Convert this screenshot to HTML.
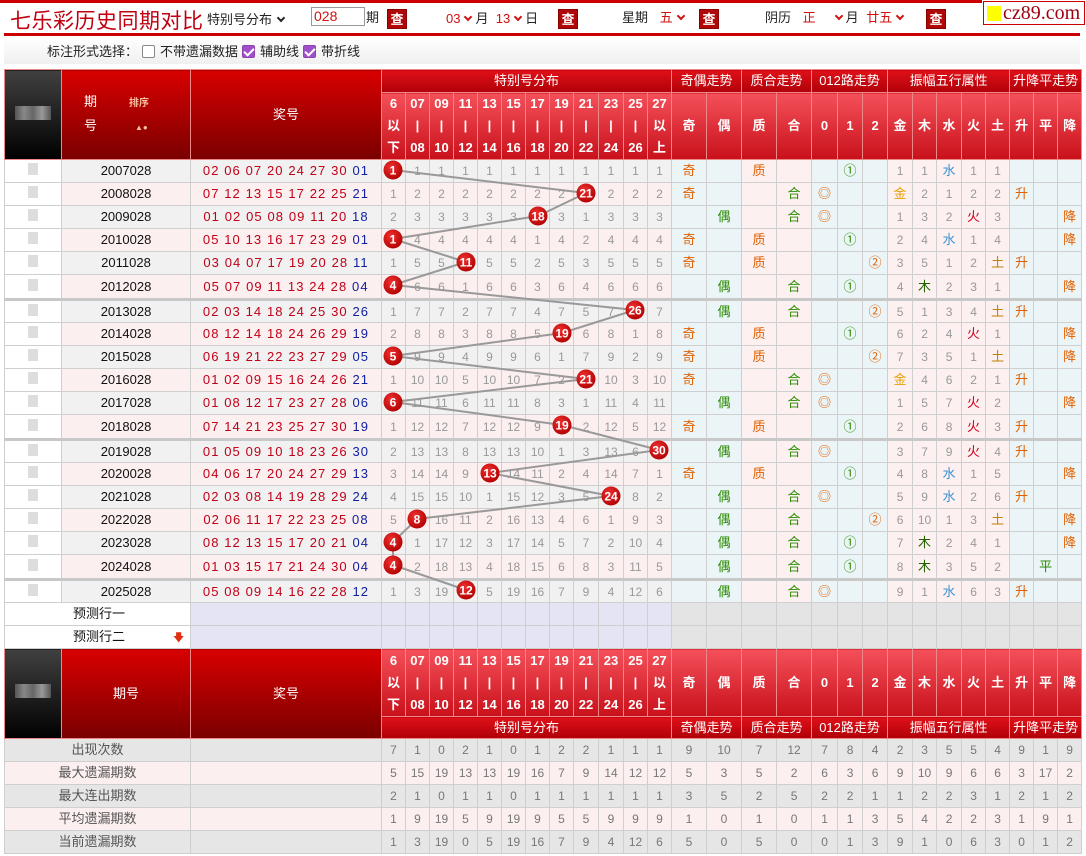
<!DOCTYPE html>
<html><head><meta charset="utf-8">
<style>
*{margin:0;padding:0;box-sizing:border-box}
body{width:1086px;height:856px;background:#fff;position:relative;overflow:hidden;font-family:"Liberation Sans","Noto Sans CJK SC",sans-serif;font-size:13px;color:#222}
.abs{position:absolute;white-space:nowrap}
.red{color:#d01010}
.btn{position:absolute;width:20px;height:20px;background:#b00808;color:#fff;font-size:13px;font-weight:bold;text-align:center;line-height:20px;border:1px solid #800}
.ar{display:inline-block;width:6px;height:6px;border-right:2px solid #d01010;border-bottom:2px solid #d01010;transform:rotate(45deg);margin:0 4px 3px 5px}
.cb{display:inline-block;width:13px;height:13px;border:1px solid #888;border-radius:2px;vertical-align:-2px;margin:0 5px 0 4px;background:#fff}
.cb.on{background:#a050c8;border-color:#9040b0;position:relative}
.cb.on:after{content:"";position:absolute;left:3px;top:0px;width:4px;height:8px;border-right:2px solid #fff;border-bottom:2px solid #fff;transform:rotate(45deg)}
table{position:absolute;left:4px;border-collapse:collapse;table-layout:fixed;width:1076px}
td{border:1px solid #cfcfcf;text-align:center;padding:0;overflow:hidden;white-space:nowrap;line-height:16px}
.h td{color:#fff;font-weight:bold;border-color:#e88;font-size:13px}
.g1{background:linear-gradient(#e01018,#b00008)}
.g2{background:linear-gradient(#f4505a,#c8101a)}
.g3{background:linear-gradient(#d80000,#7a0000)}
.pic{background:linear-gradient(#404040,#000)}
.pic i{display:inline-block;width:36px;height:14px;background:linear-gradient(90deg,#555,#888,#666,#999,#555)}
.h2 td{line-height:22px}
tr.d{height:23px}
tr.d td{color:#999;font-size:12px}
tr.d td.q{color:#111;font-size:13px}
tr.d td.k{color:#c00018;font-size:13px;letter-spacing:1.1px}
tr.d td.k b{color:#1020a0;font-weight:normal}
tr.d td.p{background:#fff}
tr.d td.p i{display:inline-block;width:10px;height:12px;background:#ddd}
tr.a td.x{background:#f1f1f1}
tr.b td.x{background:#fcefef}
td.c1{background:#ebf4f6}
td.c2{background:#fcf0f0}
tr.sep{height:25px}
tr.sep td{border-bottom:3px solid #c8c8c8}
.o{color:#e06000!important;font-size:13px!important}
.gr{color:#2a8a00!important;font-size:13px!important}
.jin{color:#e8a000!important;font-size:13px!important}
.shui{color:#3a90d0!important;font-size:13px!important}
.huo{color:#d00020!important;font-size:13px!important}
.mu{color:#206000!important;font-size:13px!important}
.tu{color:#c08000!important;font-size:13px!important}
tr.pr{height:23px}
tr.pr td.w{background:#fff;text-align:left;padding-left:68px;font-size:13px;color:#111}
tr.pr td.l{background:#e4e4f4}
tr.pr td.gy{background:#e4e4e4}
tr.s{height:23px}
tr.s td{color:#777;font-size:12px}
tr.s.a td{background:#e6e6e6}
tr.s.b td{background:#fcefef}
tr.s td.lb{font-size:13px;color:#555}
</style></head><body>
<div class="abs" style="left:0;top:0;width:982px;height:3px;background:#c00"></div>
<div class="abs" style="left:10px;top:5px;font-size:21px;color:#c00010;letter-spacing:0.5px">七乐彩历史同期对比</div>
<div class="abs" style="left:207px;top:9px;font-size:13px">特别号分布<span class="ar" style="border-color:#222;margin-left:6px"></span></div>
<div class="abs" style="left:311px;top:7px;width:54px;height:19px;border:1px solid #999;color:#d01010;font-size:14px;padding-left:2px;line-height:17px">028</div>
<div class="abs" style="left:366px;top:7px">期</div>
<div class="btn" style="left:387px;top:9px">查</div>
<div class="abs red" style="left:446px;top:8px">03<span class="ar"></span><span style="color:#222">月</span>&nbsp; 13<span class="ar"></span><span style="color:#222">日</span></div>
<div class="btn" style="left:558px;top:9px">查</div>
<div class="abs" style="left:622px;top:7px">星期 <span class="red" style="margin-left:8px">五</span><span class="ar"></span></div>
<div class="btn" style="left:699px;top:9px">查</div>
<div class="abs" style="left:765px;top:7px">阴历 <span class="red" style="margin-left:8px">正</span><span class="ar" style="margin-left:20px"></span>月 <span class="red" style="margin-left:4px">廿五</span><span class="ar"></span></div>
<div class="btn" style="left:926px;top:9px">查</div>
<div class="abs" style="left:983px;top:1px;width:102px;height:24px;border:1px solid #c00;background:#fff"><span style="position:absolute;left:3px;top:4px;width:14px;height:15px;background:#ff0"></span><span style="position:absolute;left:19px;top:0;font-family:'Liberation Serif',serif;font-size:20px;color:#a00010;line-height:22px">cz89.com</span></div>
<div class="abs" style="left:4px;top:33px;width:1076px;height:3px;background:#c00"></div>
<div class="abs" style="left:4px;top:36px;width:1076px;height:28px;background:linear-gradient(#fff,#f0f0f0)"></div>
<div class="abs" style="left:47px;top:41px;color:#222">标注形式选择：<span class="cb"></span>不带遗漏数据<span class="cb on"></span>辅助线<span class="cb on"></span>带折线</div>

<table style="top:69px">
<colgroup><col style="width:57px"><col style="width:129px"><col style="width:191px">
<col style="width:24px"><col style="width:24px"><col style="width:24px"><col style="width:24px"><col style="width:24px"><col style="width:24px"><col style="width:24px"><col style="width:24px"><col style="width:25px"><col style="width:25px"><col style="width:24px"><col style="width:24px">
<col style="width:35px"><col style="width:35px"><col style="width:35px"><col style="width:35px"><col style="width:26px"><col style="width:25px"><col style="width:25px"><col style="width:25px"><col style="width:24px"><col style="width:25px"><col style="width:24px"><col style="width:24px"><col style="width:24px"><col style="width:24px"><col style="width:24px"></colgroup>
<tr class="h" style="height:23px"><td rowspan="2" class="pic"><i></i></td><td rowspan="2" class="g3" style="text-align:left;padding-left:22px;line-height:22px;font-weight:normal">期<span style="font-size:10px;color:#f8c0a0;margin-left:32px;font-weight:bold">排序</span><br>号<span style="font-size:8px;color:#f8c0a0;margin-left:38px">▲●</span></td><td rowspan="2" class="g3" style="font-weight:normal">奖号</td><td colspan="12" class="g1" style="font-weight:normal">特别号分布</td><td colspan="2" class="g1" style="font-weight:normal">奇偶走势</td><td colspan="2" class="g1" style="font-weight:normal">质合走势</td><td colspan="3" class="g1" style="font-weight:normal">012路走势</td><td colspan="5" class="g1" style="font-weight:normal">振幅五行属性</td><td colspan="3" class="g1" style="font-weight:normal">升降平走势</td></tr>
<tr class="h h2" style="height:66px"><td class="g2">6<br>以<br>下</td><td class="g2">07<br>|<br>08</td><td class="g2">09<br>|<br>10</td><td class="g2">11<br>|<br>12</td><td class="g2">13<br>|<br>14</td><td class="g2">15<br>|<br>16</td><td class="g2">17<br>|<br>18</td><td class="g2">19<br>|<br>20</td><td class="g2">21<br>|<br>22</td><td class="g2">23<br>|<br>24</td><td class="g2">25<br>|<br>26</td><td class="g2">27<br>以<br>上</td><td class="g2">奇</td><td class="g2">偶</td><td class="g2">质</td><td class="g2">合</td><td class="g2">0</td><td class="g2">1</td><td class="g2">2</td><td class="g2">金</td><td class="g2">木</td><td class="g2">水</td><td class="g2">火</td><td class="g2">土</td><td class="g2">升</td><td class="g2">平</td><td class="g2">降</td></tr>

<tr class="d a"><td class="p"><i></i></td><td class="q x">2007028</td><td class="k x">02 06 07 20 24 27 30 <b>01</b></td><td class="x"></td><td class="x">1</td><td class="x">1</td><td class="x">1</td><td class="x">1</td><td class="x">1</td><td class="x">1</td><td class="x">1</td><td class="x">1</td><td class="x">1</td><td class="x">1</td><td class="x">1</td><td class="c1 o">奇</td><td class="c1"></td><td class="c2 o">质</td><td class="c2"></td><td class="c1"></td><td class="c1 gr">①</td><td class="c1"></td><td class="c2">1</td><td class="c2">1</td><td class="c2 shui">水</td><td class="c2">1</td><td class="c2">1</td><td class="c1"></td><td class="c1"></td><td class="c1"></td></tr>
<tr class="d b"><td class="p"><i></i></td><td class="q x">2008028</td><td class="k x">07 12 13 15 17 22 25 <b>21</b></td><td class="x">1</td><td class="x">2</td><td class="x">2</td><td class="x">2</td><td class="x">2</td><td class="x">2</td><td class="x">2</td><td class="x">2</td><td class="x"></td><td class="x">2</td><td class="x">2</td><td class="x">2</td><td class="c1 o">奇</td><td class="c1"></td><td class="c2"></td><td class="c2 gr">合</td><td class="c1 o">◎</td><td class="c1"></td><td class="c1"></td><td class="c2 jin">金</td><td class="c2">2</td><td class="c2">1</td><td class="c2">2</td><td class="c2">2</td><td class="c1 o">升</td><td class="c1"></td><td class="c1"></td></tr>
<tr class="d a"><td class="p"><i></i></td><td class="q x">2009028</td><td class="k x">01 02 05 08 09 11 20 <b>18</b></td><td class="x">2</td><td class="x">3</td><td class="x">3</td><td class="x">3</td><td class="x">3</td><td class="x">3</td><td class="x"></td><td class="x">3</td><td class="x">1</td><td class="x">3</td><td class="x">3</td><td class="x">3</td><td class="c1"></td><td class="c1 gr">偶</td><td class="c2"></td><td class="c2 gr">合</td><td class="c1 o">◎</td><td class="c1"></td><td class="c1"></td><td class="c2">1</td><td class="c2">3</td><td class="c2">2</td><td class="c2 huo">火</td><td class="c2">3</td><td class="c1"></td><td class="c1"></td><td class="c1 o">降</td></tr>
<tr class="d b"><td class="p"><i></i></td><td class="q x">2010028</td><td class="k x">05 10 13 16 17 23 29 <b>01</b></td><td class="x"></td><td class="x">4</td><td class="x">4</td><td class="x">4</td><td class="x">4</td><td class="x">4</td><td class="x">1</td><td class="x">4</td><td class="x">2</td><td class="x">4</td><td class="x">4</td><td class="x">4</td><td class="c1 o">奇</td><td class="c1"></td><td class="c2 o">质</td><td class="c2"></td><td class="c1"></td><td class="c1 gr">①</td><td class="c1"></td><td class="c2">2</td><td class="c2">4</td><td class="c2 shui">水</td><td class="c2">1</td><td class="c2">4</td><td class="c1"></td><td class="c1"></td><td class="c1 o">降</td></tr>
<tr class="d a"><td class="p"><i></i></td><td class="q x">2011028</td><td class="k x">03 04 07 17 19 20 28 <b>11</b></td><td class="x">1</td><td class="x">5</td><td class="x">5</td><td class="x"></td><td class="x">5</td><td class="x">5</td><td class="x">2</td><td class="x">5</td><td class="x">3</td><td class="x">5</td><td class="x">5</td><td class="x">5</td><td class="c1 o">奇</td><td class="c1"></td><td class="c2 o">质</td><td class="c2"></td><td class="c1"></td><td class="c1"></td><td class="c1 o">②</td><td class="c2">3</td><td class="c2">5</td><td class="c2">1</td><td class="c2">2</td><td class="c2 tu">土</td><td class="c1 o">升</td><td class="c1"></td><td class="c1"></td></tr>
<tr class="d b sep"><td class="p"><i></i></td><td class="q x">2012028</td><td class="k x">05 07 09 11 13 24 28 <b>04</b></td><td class="x"></td><td class="x">6</td><td class="x">6</td><td class="x">1</td><td class="x">6</td><td class="x">6</td><td class="x">3</td><td class="x">6</td><td class="x">4</td><td class="x">6</td><td class="x">6</td><td class="x">6</td><td class="c1"></td><td class="c1 gr">偶</td><td class="c2"></td><td class="c2 gr">合</td><td class="c1"></td><td class="c1 gr">①</td><td class="c1"></td><td class="c2">4</td><td class="c2 mu">木</td><td class="c2">2</td><td class="c2">3</td><td class="c2">1</td><td class="c1"></td><td class="c1"></td><td class="c1 o">降</td></tr>
<tr class="d a"><td class="p"><i></i></td><td class="q x">2013028</td><td class="k x">02 03 14 18 24 25 30 <b>26</b></td><td class="x">1</td><td class="x">7</td><td class="x">7</td><td class="x">2</td><td class="x">7</td><td class="x">7</td><td class="x">4</td><td class="x">7</td><td class="x">5</td><td class="x">7</td><td class="x"></td><td class="x">7</td><td class="c1"></td><td class="c1 gr">偶</td><td class="c2"></td><td class="c2 gr">合</td><td class="c1"></td><td class="c1"></td><td class="c1 o">②</td><td class="c2">5</td><td class="c2">1</td><td class="c2">3</td><td class="c2">4</td><td class="c2 tu">土</td><td class="c1 o">升</td><td class="c1"></td><td class="c1"></td></tr>
<tr class="d b"><td class="p"><i></i></td><td class="q x">2014028</td><td class="k x">08 12 14 18 24 26 29 <b>19</b></td><td class="x">2</td><td class="x">8</td><td class="x">8</td><td class="x">3</td><td class="x">8</td><td class="x">8</td><td class="x">5</td><td class="x"></td><td class="x">6</td><td class="x">8</td><td class="x">1</td><td class="x">8</td><td class="c1 o">奇</td><td class="c1"></td><td class="c2 o">质</td><td class="c2"></td><td class="c1"></td><td class="c1 gr">①</td><td class="c1"></td><td class="c2">6</td><td class="c2">2</td><td class="c2">4</td><td class="c2 huo">火</td><td class="c2">1</td><td class="c1"></td><td class="c1"></td><td class="c1 o">降</td></tr>
<tr class="d a"><td class="p"><i></i></td><td class="q x">2015028</td><td class="k x">06 19 21 22 23 27 29 <b>05</b></td><td class="x"></td><td class="x">9</td><td class="x">9</td><td class="x">4</td><td class="x">9</td><td class="x">9</td><td class="x">6</td><td class="x">1</td><td class="x">7</td><td class="x">9</td><td class="x">2</td><td class="x">9</td><td class="c1 o">奇</td><td class="c1"></td><td class="c2 o">质</td><td class="c2"></td><td class="c1"></td><td class="c1"></td><td class="c1 o">②</td><td class="c2">7</td><td class="c2">3</td><td class="c2">5</td><td class="c2">1</td><td class="c2 tu">土</td><td class="c1"></td><td class="c1"></td><td class="c1 o">降</td></tr>
<tr class="d b"><td class="p"><i></i></td><td class="q x">2016028</td><td class="k x">01 02 09 15 16 24 26 <b>21</b></td><td class="x">1</td><td class="x">10</td><td class="x">10</td><td class="x">5</td><td class="x">10</td><td class="x">10</td><td class="x">7</td><td class="x">2</td><td class="x"></td><td class="x">10</td><td class="x">3</td><td class="x">10</td><td class="c1 o">奇</td><td class="c1"></td><td class="c2"></td><td class="c2 gr">合</td><td class="c1 o">◎</td><td class="c1"></td><td class="c1"></td><td class="c2 jin">金</td><td class="c2">4</td><td class="c2">6</td><td class="c2">2</td><td class="c2">1</td><td class="c1 o">升</td><td class="c1"></td><td class="c1"></td></tr>
<tr class="d a"><td class="p"><i></i></td><td class="q x">2017028</td><td class="k x">01 08 12 17 23 27 28 <b>06</b></td><td class="x"></td><td class="x">11</td><td class="x">11</td><td class="x">6</td><td class="x">11</td><td class="x">11</td><td class="x">8</td><td class="x">3</td><td class="x">1</td><td class="x">11</td><td class="x">4</td><td class="x">11</td><td class="c1"></td><td class="c1 gr">偶</td><td class="c2"></td><td class="c2 gr">合</td><td class="c1 o">◎</td><td class="c1"></td><td class="c1"></td><td class="c2">1</td><td class="c2">5</td><td class="c2">7</td><td class="c2 huo">火</td><td class="c2">2</td><td class="c1"></td><td class="c1"></td><td class="c1 o">降</td></tr>
<tr class="d b sep"><td class="p"><i></i></td><td class="q x">2018028</td><td class="k x">07 14 21 23 25 27 30 <b>19</b></td><td class="x">1</td><td class="x">12</td><td class="x">12</td><td class="x">7</td><td class="x">12</td><td class="x">12</td><td class="x">9</td><td class="x"></td><td class="x">2</td><td class="x">12</td><td class="x">5</td><td class="x">12</td><td class="c1 o">奇</td><td class="c1"></td><td class="c2 o">质</td><td class="c2"></td><td class="c1"></td><td class="c1 gr">①</td><td class="c1"></td><td class="c2">2</td><td class="c2">6</td><td class="c2">8</td><td class="c2 huo">火</td><td class="c2">3</td><td class="c1 o">升</td><td class="c1"></td><td class="c1"></td></tr>
<tr class="d a"><td class="p"><i></i></td><td class="q x">2019028</td><td class="k x">01 05 09 10 18 23 26 <b>30</b></td><td class="x">2</td><td class="x">13</td><td class="x">13</td><td class="x">8</td><td class="x">13</td><td class="x">13</td><td class="x">10</td><td class="x">1</td><td class="x">3</td><td class="x">13</td><td class="x">6</td><td class="x"></td><td class="c1"></td><td class="c1 gr">偶</td><td class="c2"></td><td class="c2 gr">合</td><td class="c1 o">◎</td><td class="c1"></td><td class="c1"></td><td class="c2">3</td><td class="c2">7</td><td class="c2">9</td><td class="c2 huo">火</td><td class="c2">4</td><td class="c1 o">升</td><td class="c1"></td><td class="c1"></td></tr>
<tr class="d b"><td class="p"><i></i></td><td class="q x">2020028</td><td class="k x">04 06 17 20 24 27 29 <b>13</b></td><td class="x">3</td><td class="x">14</td><td class="x">14</td><td class="x">9</td><td class="x"></td><td class="x">14</td><td class="x">11</td><td class="x">2</td><td class="x">4</td><td class="x">14</td><td class="x">7</td><td class="x">1</td><td class="c1 o">奇</td><td class="c1"></td><td class="c2 o">质</td><td class="c2"></td><td class="c1"></td><td class="c1 gr">①</td><td class="c1"></td><td class="c2">4</td><td class="c2">8</td><td class="c2 shui">水</td><td class="c2">1</td><td class="c2">5</td><td class="c1"></td><td class="c1"></td><td class="c1 o">降</td></tr>
<tr class="d a"><td class="p"><i></i></td><td class="q x">2021028</td><td class="k x">02 03 08 14 19 28 29 <b>24</b></td><td class="x">4</td><td class="x">15</td><td class="x">15</td><td class="x">10</td><td class="x">1</td><td class="x">15</td><td class="x">12</td><td class="x">3</td><td class="x">5</td><td class="x"></td><td class="x">8</td><td class="x">2</td><td class="c1"></td><td class="c1 gr">偶</td><td class="c2"></td><td class="c2 gr">合</td><td class="c1 o">◎</td><td class="c1"></td><td class="c1"></td><td class="c2">5</td><td class="c2">9</td><td class="c2 shui">水</td><td class="c2">2</td><td class="c2">6</td><td class="c1 o">升</td><td class="c1"></td><td class="c1"></td></tr>
<tr class="d b"><td class="p"><i></i></td><td class="q x">2022028</td><td class="k x">02 06 11 17 22 23 25 <b>08</b></td><td class="x">5</td><td class="x"></td><td class="x">16</td><td class="x">11</td><td class="x">2</td><td class="x">16</td><td class="x">13</td><td class="x">4</td><td class="x">6</td><td class="x">1</td><td class="x">9</td><td class="x">3</td><td class="c1"></td><td class="c1 gr">偶</td><td class="c2"></td><td class="c2 gr">合</td><td class="c1"></td><td class="c1"></td><td class="c1 o">②</td><td class="c2">6</td><td class="c2">10</td><td class="c2">1</td><td class="c2">3</td><td class="c2 tu">土</td><td class="c1"></td><td class="c1"></td><td class="c1 o">降</td></tr>
<tr class="d a"><td class="p"><i></i></td><td class="q x">2023028</td><td class="k x">08 12 13 15 17 20 21 <b>04</b></td><td class="x"></td><td class="x">1</td><td class="x">17</td><td class="x">12</td><td class="x">3</td><td class="x">17</td><td class="x">14</td><td class="x">5</td><td class="x">7</td><td class="x">2</td><td class="x">10</td><td class="x">4</td><td class="c1"></td><td class="c1 gr">偶</td><td class="c2"></td><td class="c2 gr">合</td><td class="c1"></td><td class="c1 gr">①</td><td class="c1"></td><td class="c2">7</td><td class="c2 mu">木</td><td class="c2">2</td><td class="c2">4</td><td class="c2">1</td><td class="c1"></td><td class="c1"></td><td class="c1 o">降</td></tr>
<tr class="d b sep"><td class="p"><i></i></td><td class="q x">2024028</td><td class="k x">01 03 15 17 21 24 30 <b>04</b></td><td class="x"></td><td class="x">2</td><td class="x">18</td><td class="x">13</td><td class="x">4</td><td class="x">18</td><td class="x">15</td><td class="x">6</td><td class="x">8</td><td class="x">3</td><td class="x">11</td><td class="x">5</td><td class="c1"></td><td class="c1 gr">偶</td><td class="c2"></td><td class="c2 gr">合</td><td class="c1"></td><td class="c1 gr">①</td><td class="c1"></td><td class="c2">8</td><td class="c2 mu">木</td><td class="c2">3</td><td class="c2">5</td><td class="c2">2</td><td class="c1"></td><td class="c1 gr">平</td><td class="c1"></td></tr>
<tr class="d a"><td class="p"><i></i></td><td class="q x">2025028</td><td class="k x">05 08 09 14 16 22 28 <b>12</b></td><td class="x">1</td><td class="x">3</td><td class="x">19</td><td class="x"></td><td class="x">5</td><td class="x">19</td><td class="x">16</td><td class="x">7</td><td class="x">9</td><td class="x">4</td><td class="x">12</td><td class="x">6</td><td class="c1"></td><td class="c1 gr">偶</td><td class="c2"></td><td class="c2 gr">合</td><td class="c1 o">◎</td><td class="c1"></td><td class="c1"></td><td class="c2">9</td><td class="c2">1</td><td class="c2 shui">水</td><td class="c2">6</td><td class="c2">3</td><td class="c1 o">升</td><td class="c1"></td><td class="c1"></td></tr>

<tr class="pr"><td colspan="2" class="w">预测行一</td><td class="l"></td><td class="l"></td><td class="l"></td><td class="l"></td><td class="l"></td><td class="l"></td><td class="l"></td><td class="l"></td><td class="l"></td><td class="l"></td><td class="l"></td><td class="l"></td><td class="l"></td><td class="gy"></td><td class="gy"></td><td class="gy"></td><td class="gy"></td><td class="gy"></td><td class="gy"></td><td class="gy"></td><td class="gy"></td><td class="gy"></td><td class="gy"></td><td class="gy"></td><td class="gy"></td><td class="gy"></td><td class="gy"></td><td class="gy"></td></tr>
<tr class="pr"><td colspan="2" class="w">预测行二<span style="color:#e03010;font-size:11px;margin-left:48px">🡇</span></td><td class="l"></td><td class="l"></td><td class="l"></td><td class="l"></td><td class="l"></td><td class="l"></td><td class="l"></td><td class="l"></td><td class="l"></td><td class="l"></td><td class="l"></td><td class="l"></td><td class="l"></td><td class="gy"></td><td class="gy"></td><td class="gy"></td><td class="gy"></td><td class="gy"></td><td class="gy"></td><td class="gy"></td><td class="gy"></td><td class="gy"></td><td class="gy"></td><td class="gy"></td><td class="gy"></td><td class="gy"></td><td class="gy"></td><td class="gy"></td></tr>

<tr class="h h2" style="height:68px"><td rowspan="2" class="pic"><i></i></td><td rowspan="2" class="g3" style="font-weight:normal">期号</td><td rowspan="2" class="g3" style="font-weight:normal">奖号</td><td class="g2">6<br>以<br>下</td><td class="g2">07<br>|<br>08</td><td class="g2">09<br>|<br>10</td><td class="g2">11<br>|<br>12</td><td class="g2">13<br>|<br>14</td><td class="g2">15<br>|<br>16</td><td class="g2">17<br>|<br>18</td><td class="g2">19<br>|<br>20</td><td class="g2">21<br>|<br>22</td><td class="g2">23<br>|<br>24</td><td class="g2">25<br>|<br>26</td><td class="g2">27<br>以<br>上</td><td class="g2">奇</td><td class="g2">偶</td><td class="g2">质</td><td class="g2">合</td><td class="g2">0</td><td class="g2">1</td><td class="g2">2</td><td class="g2">金</td><td class="g2">木</td><td class="g2">水</td><td class="g2">火</td><td class="g2">土</td><td class="g2">升</td><td class="g2">平</td><td class="g2">降</td></tr>
<tr class="h" style="height:22px"><td colspan="12" class="g1" style="font-weight:normal">特别号分布</td><td colspan="2" class="g1" style="font-weight:normal">奇偶走势</td><td colspan="2" class="g1" style="font-weight:normal">质合走势</td><td colspan="3" class="g1" style="font-weight:normal">012路走势</td><td colspan="5" class="g1" style="font-weight:normal">振幅五行属性</td><td colspan="3" class="g1" style="font-weight:normal">升降平走势</td></tr>

<tr class="s a"><td colspan="2" class="lb">出现次数</td><td></td><td>7</td><td>1</td><td>0</td><td>2</td><td>1</td><td>0</td><td>1</td><td>2</td><td>2</td><td>1</td><td>1</td><td>1</td><td>9</td><td>10</td><td>7</td><td>12</td><td>7</td><td>8</td><td>4</td><td>2</td><td>3</td><td>5</td><td>5</td><td>4</td><td>9</td><td>1</td><td>9</td></tr>
<tr class="s b"><td colspan="2" class="lb">最大遗漏期数</td><td></td><td>5</td><td>15</td><td>19</td><td>13</td><td>13</td><td>19</td><td>16</td><td>7</td><td>9</td><td>14</td><td>12</td><td>12</td><td>5</td><td>3</td><td>5</td><td>2</td><td>6</td><td>3</td><td>6</td><td>9</td><td>10</td><td>9</td><td>6</td><td>6</td><td>3</td><td>17</td><td>2</td></tr>
<tr class="s a"><td colspan="2" class="lb">最大连出期数</td><td></td><td>2</td><td>1</td><td>0</td><td>1</td><td>1</td><td>0</td><td>1</td><td>1</td><td>1</td><td>1</td><td>1</td><td>1</td><td>3</td><td>5</td><td>2</td><td>5</td><td>2</td><td>2</td><td>1</td><td>1</td><td>2</td><td>2</td><td>3</td><td>1</td><td>2</td><td>1</td><td>2</td></tr>
<tr class="s b"><td colspan="2" class="lb">平均遗漏期数</td><td></td><td>1</td><td>9</td><td>19</td><td>5</td><td>9</td><td>19</td><td>9</td><td>5</td><td>5</td><td>9</td><td>9</td><td>9</td><td>1</td><td>0</td><td>1</td><td>0</td><td>1</td><td>1</td><td>3</td><td>5</td><td>4</td><td>2</td><td>2</td><td>3</td><td>1</td><td>9</td><td>1</td></tr>
<tr class="s a"><td colspan="2" class="lb">当前遗漏期数</td><td></td><td>1</td><td>3</td><td>19</td><td>0</td><td>5</td><td>19</td><td>16</td><td>7</td><td>9</td><td>4</td><td>12</td><td>6</td><td>5</td><td>0</td><td>5</td><td>0</td><td>0</td><td>1</td><td>3</td><td>9</td><td>1</td><td>0</td><td>6</td><td>3</td><td>0</td><td>1</td><td>2</td></tr>
</table>

<svg class="abs" style="left:0;top:0" width="1086" height="856" viewBox="0 0 1086 856">
<defs><radialGradient id="rb" cx="0.4" cy="0.35" r="0.7"><stop offset="0" stop-color="#f03030"/><stop offset="1" stop-color="#b00000"/></radialGradient></defs>
<polyline fill="none" stroke="#999" stroke-width="2" points="393,170 586,193 538,216 393,239 466,262 393,285 635,310 562,333 393,356 586,379 393,402 562,425 659,450 490,473 611,496 417,519 393,542 393,565 466,590"/>
<g fill="url(#rb)">
<circle cx="393" cy="170" r="9.5"/><circle cx="586" cy="193" r="9.5"/><circle cx="538" cy="216" r="9.5"/><circle cx="393" cy="239" r="9.5"/><circle cx="466" cy="262" r="9.5"/><circle cx="393" cy="285" r="9.5"/><circle cx="635" cy="310" r="9.5"/><circle cx="562" cy="333" r="9.5"/><circle cx="393" cy="356" r="9.5"/><circle cx="586" cy="379" r="9.5"/><circle cx="393" cy="402" r="9.5"/><circle cx="562" cy="425" r="9.5"/><circle cx="659" cy="450" r="9.5"/><circle cx="490" cy="473" r="9.5"/><circle cx="611" cy="496" r="9.5"/><circle cx="417" cy="519" r="9.5"/><circle cx="393" cy="542" r="9.5"/><circle cx="393" cy="565" r="9.5"/><circle cx="466" cy="590" r="9.5"/>
</g>
<g fill="#fff" font-family="Liberation Sans, sans-serif" font-size="12" font-weight="bold" text-anchor="middle">
<text x="393" y="174.5">1</text><text x="586" y="197.5">21</text><text x="538" y="220.5">18</text><text x="393" y="243.5">1</text><text x="466" y="266.5">11</text><text x="393" y="289.5">4</text><text x="635" y="314.5">26</text><text x="562" y="337.5">19</text><text x="393" y="360.5">5</text><text x="586" y="383.5">21</text><text x="393" y="406.5">6</text><text x="562" y="429.5">19</text><text x="659" y="454.5">30</text><text x="490" y="477.5">13</text><text x="611" y="500.5">24</text><text x="417" y="523.5">8</text><text x="393" y="546.5">4</text><text x="393" y="569.5">4</text><text x="466" y="594.5">12</text>
</g>
</svg>
</body></html>
